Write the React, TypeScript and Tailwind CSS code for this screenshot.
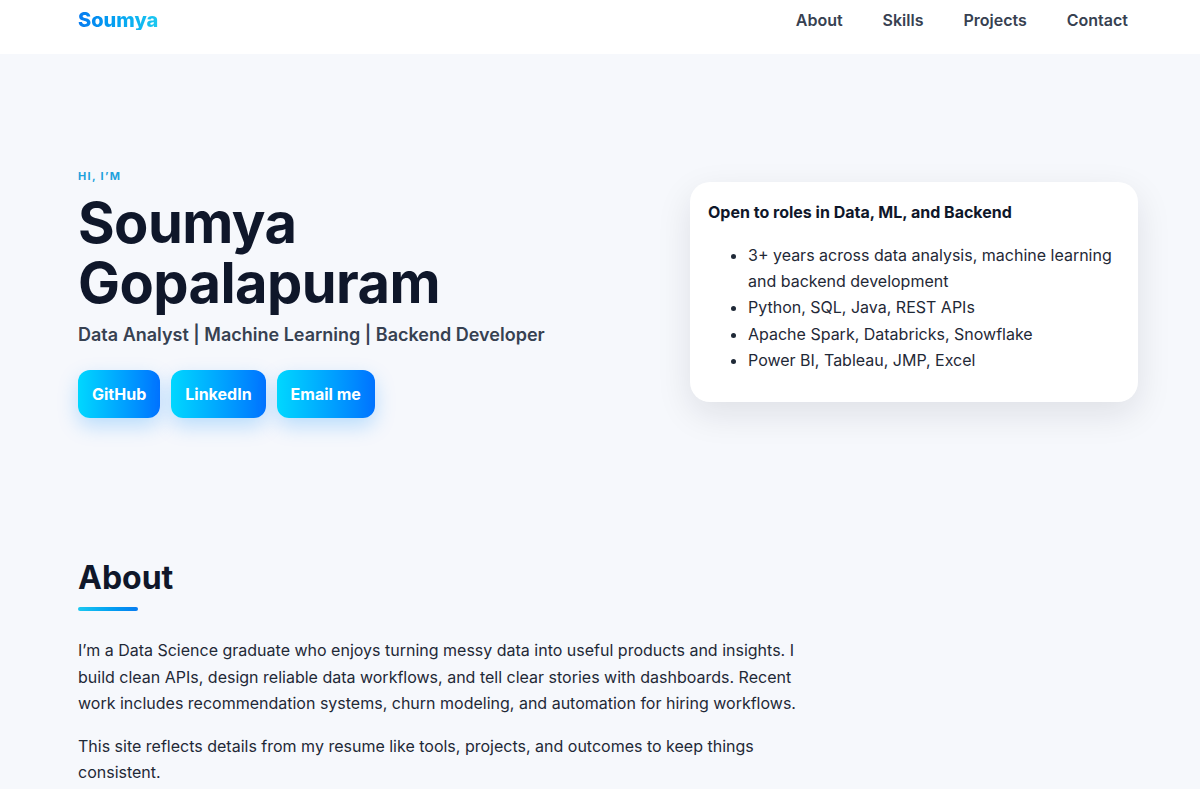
import React from "react";

export default function App() {
  return (
    <div className="min-h-screen bg-[#f6f8fc] text-[#0f172a]" style={{ fontFamily: "Inter, 'Noto Sans', sans-serif" }}>
      <header className="bg-white h-[54px]">
        <div className="mx-auto max-w-[1200px] px-[78px] h-full flex items-center justify-between">
          <a className="text-[20px] font-extrabold bg-gradient-to-r from-[#0a7cf0] to-[#1cc8f0] bg-clip-text text-transparent leading-none -mt-[14px]">Soumya</a>
          <nav className="flex gap-[40px] text-[16px] font-semibold text-[#374151] -mt-[14px] mr-[-6px]">
            <a>About</a>
            <a>Skills</a>
            <a>Projects</a>
            <a>Contact</a>
          </nav>
        </div>
      </header>

      <section className="mx-auto max-w-[1200px] px-[78px] pt-[117px] flex justify-between">
        <div className="w-[560px]">
          <p className="text-[11px] font-bold tracking-[0.12em] text-[#1ea1dc] leading-none">HI, I’M</p>
          <h1 className="mt-[11px] text-[56px] font-bold leading-[60px] tracking-[-0.01em] text-[#0f172a]">
            Soumya<br />Gopalapuram
          </h1>
          <p className="mt-[10px] text-[18px] font-semibold text-[#374151] leading-[24px]">
            Data Analyst | Machine Learning | Backend Developer
          </p>
          <div className="mt-[23px] flex gap-[11px]">
            {["GitHub", "LinkedIn", "Email me"].map((t) => (
              <a
                key={t}
                className="h-[48px] px-[14px] rounded-[12px] flex items-center text-white font-bold text-[16px] bg-gradient-to-r from-[#00d7ff] to-[#0072ff] shadow-[0_8px_20px_rgba(0,140,255,0.25)]"
              >
                {t}
              </a>
            ))}
          </div>
        </div>
        <div className="mt-[11px] mr-[-16px] w-[448px] h-[220px] bg-white rounded-[20px] shadow-[0_12px_35px_rgba(15,23,42,0.10)] px-[18px] pt-[20px]">
          <h3 className="text-[16px] font-bold text-[#0f172a] leading-[20px]">Open to roles in Data, ML, and Backend</h3>
          <ul className="mt-[20px] list-disc pl-[40px] text-[16px] text-[#1f2937] leading-[26.2px]">
            <li>3+ years across data analysis, machine learning and backend development</li>
            <li>Python, SQL, Java, REST APIs</li>
            <li>Apache Spark, Databricks, Snowflake</li>
            <li>Power BI, Tableau, JMP, Excel</li>
          </ul>
        </div>
      </section>

      <section className="mx-auto max-w-[1200px] px-[78px] pt-[140px]">
        <h2 className="text-[32px] font-bold leading-[40px] text-[#0f172a]">About</h2>
        <div className="mt-[9px] h-[4px] w-[60px] rounded-full bg-gradient-to-r from-[#1cc8f0] to-[#0a7cf0]" />
        <p className="mt-[26px] max-w-[730px] text-[16px] leading-[26.5px] text-[#1f2937]">
          I’m a Data Science graduate who enjoys turning messy data into useful products and insights. I build clean APIs, design reliable data workflows, and tell clear stories with dashboards. Recent work includes recommendation systems, churn modeling, and automation for hiring workflows.
        </p>
        <p className="mt-[16px] max-w-[730px] text-[16px] leading-[26.5px] text-[#1f2937]">
          This site reflects details from my resume like tools, projects, and outcomes to keep things consistent.
        </p>
      </section>
    </div>
  );
}
